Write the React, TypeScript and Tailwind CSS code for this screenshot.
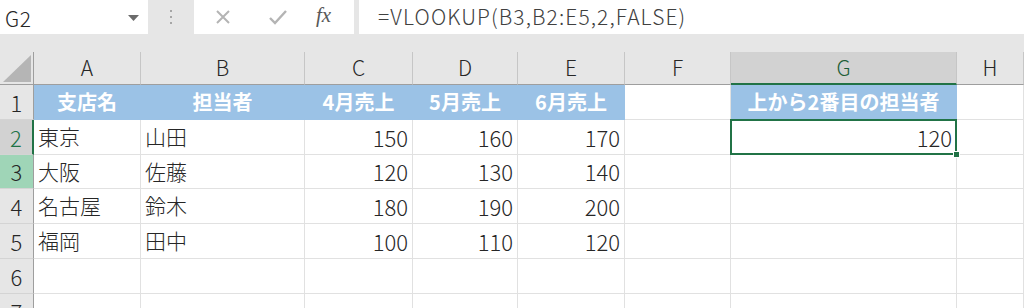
import type { ReactNode } from 'react';

const cols = [
  { key: 'A', w: 'w-[107px]' },
  { key: 'B', w: 'w-[164px]' },
  { key: 'C', w: 'w-[108px]' },
  { key: 'D', w: 'w-[105px]' },
  { key: 'E', w: 'w-[107px]' },
  { key: 'F', w: 'w-[106px]' },
  { key: 'G', w: 'w-[226px]' },
  { key: 'H', w: 'flex-1' },
];

type Cell = { v?: string; align?: 'l' | 'r' | 'c'; head?: boolean; sel?: boolean };

const rows: { n: number; h: string; cells: Cell[] }[] = [
  {
    n: 1,
    h: 'h-[35px]',
    cells: [
      { v: '支店名', align: 'c', head: true },
      { v: '担当者', align: 'c', head: true },
      { v: '4月売上', align: 'c', head: true },
      { v: '5月売上', align: 'c', head: true },
      { v: '6月売上', align: 'c', head: true },
      {},
      { v: '上から2番目の担当者', align: 'c', head: true },
      {},
    ],
  },
  {
    n: 2,
    h: 'h-[35px]',
    cells: [{ v: '東京' }, { v: '山田' }, { v: '150', align: 'r' }, { v: '160', align: 'r' }, { v: '170', align: 'r' }, {}, { v: '120', align: 'r', sel: true }, {}],
  },
  {
    n: 3,
    h: 'h-[34px]',
    cells: [{ v: '大阪' }, { v: '佐藤' }, { v: '120', align: 'r' }, { v: '130', align: 'r' }, { v: '140', align: 'r' }, {}, {}, {}],
  },
  {
    n: 4,
    h: 'h-[35px]',
    cells: [{ v: '名古屋' }, { v: '鈴木' }, { v: '180', align: 'r' }, { v: '190', align: 'r' }, { v: '200', align: 'r' }, {}, {}, {}],
  },
  {
    n: 5,
    h: 'h-[35px]',
    cells: [{ v: '福岡' }, { v: '田中' }, { v: '100', align: 'r' }, { v: '110', align: 'r' }, { v: '120', align: 'r' }, {}, {}, {}],
  },
  { n: 6, h: 'h-[35px]', cells: [{}, {}, {}, {}, {}, {}, {}, {}] },
  { n: 7, h: 'h-[35px]', cells: [{}, {}, {}, {}, {}, {}, {}, {}] },
];

const jp = "font-['Noto_Sans_CJK_JP','Noto_Sans',sans-serif]";

function RowHead({ n, h }: { n: number; h: string }) {
  const cls =
    n === 2
      ? 'bg-[#d2d2d2] text-[#217346] border-r-2 border-r-[#217346]'
      : n === 3
        ? 'bg-[#9fd5b7] text-[#262626] border-r border-r-[#9e9e9e]'
        : 'bg-[#e6e6e6] text-[#262626] border-r border-r-[#9e9e9e]';
  return (
    <div className={`w-[34px] shrink-0 ${h} ${cls} border-b border-b-[#d4d4d4] flex items-center justify-center text-[22px] font-light ${jp}`}>
      {n}
    </div>
  );
}

function DataCell({ c, w, h }: { c: Cell; w: string; h: string }): ReactNode {
  const align = c.align === 'r' ? 'justify-end pr-[4px]' : c.align === 'c' ? 'justify-center' : 'justify-start pl-[4px]';
  const bg = c.head
    ? 'bg-[#9bc2e6] border-[#9bc2e6] text-white font-bold text-[20px]'
    : `bg-white border-[#e1e1e1] text-[#262626] font-light ${c.align === 'r' ? 'text-[22px]' : 'text-[21px]'}`;
  return (
    <div className={`${w} shrink-0 ${h} relative border-r border-b ${bg} flex items-center ${align} ${jp} whitespace-nowrap`}>
      {c.v}
      {c.sel && (
        <>
          <div className="absolute z-10 -left-[1px] -top-[1px] -right-[1px] -bottom-[1px] border-2 border-[#217346] pointer-events-none" />
          <div className="absolute z-10 -right-[4px] -bottom-[4px] w-[7px] h-[7px] bg-[#217346] border border-white" />
        </>
      )}
    </div>
  );
}

export default function App() {
  return (
    <div className="w-[1024px] h-[308px] overflow-hidden bg-[#e6e6e6] select-none">
      {/* formula bar */}
      <div className="h-[52px] flex items-start">
        <div className="w-[148px] h-[34px] bg-white flex items-center justify-between pl-[5px] pr-[9px]">
          <span className={`text-[21px] text-[#262626] font-light mt-[4px] tracking-[0.5px] ${jp}`}>G2</span>
          <svg width="11" height="6" viewBox="0 0 11 6" className="mt-[1px]">
            <path d="M0 0h11L5.5 6z" fill="#6b6b6b" />
          </svg>
        </div>
        <div className="w-[46px] h-[34px] flex items-center justify-center">
          <svg width="4" height="16" viewBox="0 0 4 16">
            <rect x="1" y="1" width="2" height="2" fill="#a6a6a6" />
            <rect x="1" y="7" width="2" height="2" fill="#a6a6a6" />
            <rect x="1" y="13" width="2" height="2" fill="#a6a6a6" />
          </svg>
        </div>
        <div className="w-[160px] h-[34px] bg-white flex items-center pl-[21px]">
          <svg width="16" height="16" viewBox="0 0 16 16">
            <path d="M2 2L14 14M14 2L2 14" stroke="#b4b4b4" strokeWidth="2" />
          </svg>
          <svg width="20" height="16" viewBox="0 0 20 16" className="ml-[37px]">
            <path d="M2 9l5 5L18 2" stroke="#b4b4b4" strokeWidth="2.4" fill="none" />
          </svg>
          <span className="ml-[28px] text-[21px] italic text-[#595959] font-['Liberation_Serif',serif] -mt-[3px]">fx</span>
        </div>
        <div className="ml-[5px] flex-1 h-[34px] bg-white flex items-center pl-[19px]">
          <span className={`text-[21px] text-[#404040] font-light tracking-[1.1px] ${jp}`}>=VLOOKUP(B3,B2:E5,2,FALSE)</span>
        </div>
      </div>

      {/* column headers */}
      <div className="h-[33px] flex">
        <div className="w-[34px] shrink-0 h-full flex items-end justify-end border-r border-[#9e9e9e] border-b">
          <svg width="31" height="29" viewBox="0 0 31 29" className="mb-[1px] mr-[1px]">
            <path d="M30 1V28H2z" fill="#b5b5b5" />
          </svg>
        </div>
        {cols.map((c) => (
          <div
            key={c.key}
            className={`${c.w} shrink-0 h-full flex items-center justify-center text-[21px] font-light ${jp} ${
              c.key === 'G'
                ? 'bg-[#d2d2d2] text-[#1d5e38] border-b-2 border-b-[#217346] border-r border-r-[#c6c6c6]'
                : 'text-[#262626] border-r border-r-[#c6c6c6] border-b border-b-[#9e9e9e]'
            }`}
          >
            {c.key}
          </div>
        ))}
      </div>

      {/* grid */}
      {rows.map((r) => (
        <div key={r.n} className="flex">
          <RowHead n={r.n} h={r.h} />
          {r.cells.map((c, i) => (
            <DataCell key={i} c={c} w={cols[i].w} h={r.h} />
          ))}
        </div>
      ))}
    </div>
  );
}
